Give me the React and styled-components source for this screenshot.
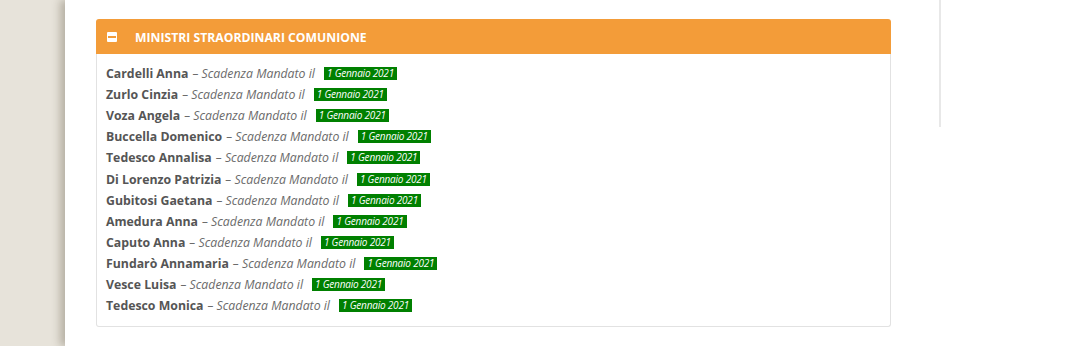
import React from "react";
import styled, { createGlobalStyle } from "styled-components";

const Global = createGlobalStyle`
  html, body { margin: 0; padding: 0; background: #ffffff; }
  body { font-family: "Open Sans", "Noto Sans", sans-serif; }
`;

const Page = styled.div`
  display: flex;
  width: 1080px;
  height: 346px;
  overflow: hidden;
  background: #e7e3da;
`;

const Main = styled.div`
  margin-left: 65px;
  flex: 1;
  display: flex;
  align-items: flex-start;
  background: #fff;
  box-shadow: -5px 0 8px rgba(60, 50, 30, 0.28);
`;

const Content = styled.div`
  width: 795px;
  margin-left: 31px;
  margin-top: 19px;
`;

const Sidebar = styled.div`
  margin-left: 48px;
  width: 0;
  height: 127px;
  border-left: 2px solid #e8e8e8;
`;

const Header = styled.div`
  display: flex;
  align-items: center;
  height: 35px;
  padding-top: 1px;
  box-sizing: border-box;
  background: #f39c39;
  border-radius: 3px 3px 0 0;
  padding-left: 11px;
  color: #fff;
  font-weight: 700;
  font-size: 12.2px;
  text-transform: uppercase;
`;

const Icon = styled.span`
  display: inline-block;
  position: relative;
  width: 10px;
  height: 10px;
  background: #fff;
  border-radius: 1px;
  margin-right: 18px;
  &::after {
    content: "";
    position: absolute;
    left: 1px;
    right: 1px;
    top: 4px;
    height: 2px;
    background: #f39c39;
  }
`;

const Body = styled.div`
  border: 1px solid #e2e2e2;
  border-top: none;
  border-radius: 0 0 3px 3px;
  padding: 9px 9px 10px;
`;

const Row = styled.div`
  display: flex;
  align-items: center;
  height: 21.1px;
  font-size: 12.3px;
  color: #666;
`;

const Name = styled.b`
  font-weight: 700;
  color: #555;
`;

const Note = styled.i`
  font-style: italic;
  color: #6b6b6b;
  margin-left: 4px;
`;

const Badge = styled.span`
  display: inline-block;
  margin-left: 9px;
  background: #008000;
  color: #fff;
  font-style: italic;
  font-size: 10px;
  line-height: 13px;
  padding: 0 3px;
  letter-spacing: -0.2px;
`;

const people = [
  "Cardelli Anna",
  "Zurlo Cinzia",
  "Voza Angela",
  "Buccella Domenico",
  "Tedesco Annalisa",
  "Di Lorenzo Patrizia",
  "Gubitosi Gaetana",
  "Amedura Anna",
  "Caputo Anna",
  "Fundarò Annamaria",
  "Vesce Luisa",
  "Tedesco Monica",
];

export default function App() {
  return (
    <>
      <Global />
      <Page>
        <Main>
          <Content>
            <Header>
              <Icon />
              Ministri Straordinari Comunione
            </Header>
            <Body>
              {people.map((p) => (
                <Row key={p}>
                  <Name>{p}</Name>
                  <Note>– Scadenza Mandato il</Note>
                  <Badge>1 Gennaio 2021</Badge>
                </Row>
              ))}
            </Body>
          </Content>
          <Sidebar />
        </Main>
      </Page>
    </>
  );
}
